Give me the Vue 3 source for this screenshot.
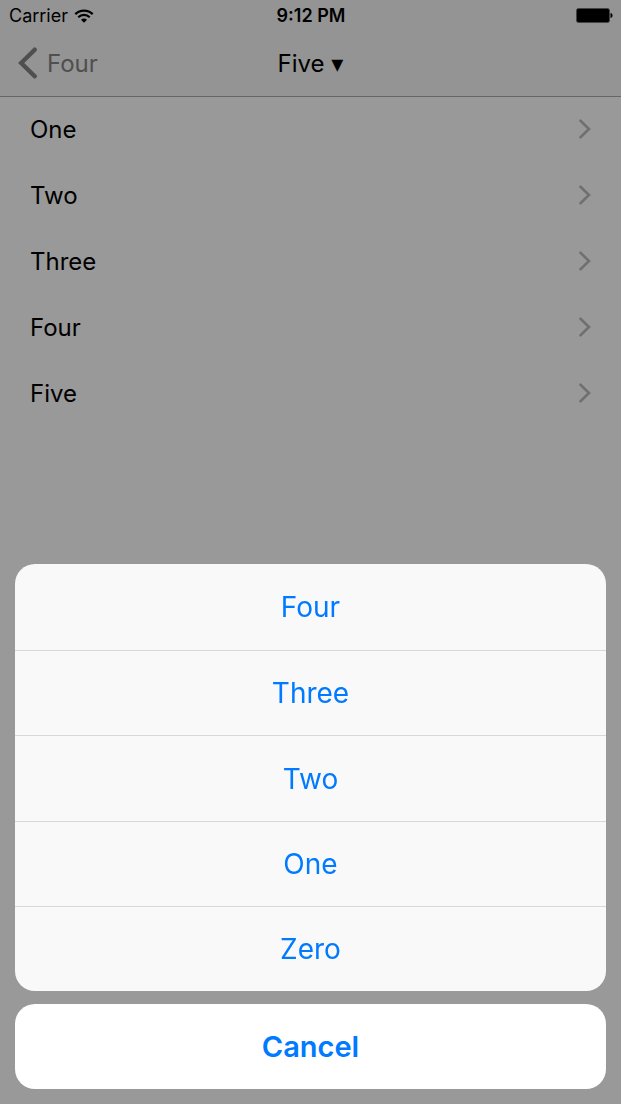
<script setup>
const rows = ['One', 'Two', 'Three', 'Four', 'Five']
const choices = ['Four', 'Three', 'Two', 'One', 'Zero']
</script>

<template>
  <div class="screen">
    <header class="top">
      <div class="status">
        <div class="carrier">
          <span>Carrier</span>
          <svg class="wifi" viewBox="0 0 20 14" aria-hidden="true">
            <path d="M1.3 5.1a12.4 12.4 0 0 1 17.4 0M4.3 8.3a8 8 0 0 1 11.4 0" fill="none" stroke="#000" stroke-width="2.3" />
            <path d="M10 13.7 7 10.7a4.200 4.200 0 0 1 6 0z" fill="#000" />
          </svg>
        </div>
        <span class="clock">9:12 PM</span>
        <svg class="battery" viewBox="0 0 37 15" aria-label="Battery full">
          <rect x="0.5" y="0.5" width="33" height="14" rx="2" fill="#000" stroke="#707070" />
          <path d="M34.5 5c1.3.3 2 1.2 2 2.5s-.7 2.2-2 2.5z" fill="#000" />
        </svg>
      </div>
      <nav class="bar">
        <button class="back" type="button">
          <svg class="back-icon" viewBox="0 0 19 32" aria-hidden="true">
            <path d="M16.7 2.700 3.200 16l13.500 13.300" fill="none" stroke="#848484" stroke-width="4.400" stroke-linecap="round" />
          </svg>
          <span>Four</span>
        </button>
        <button class="title" type="button">Five <span class="caret">▾</span></button>
      </nav>
    </header>
    <main>
      <ul class="list">
        <li v-for="row in rows" :key="row">
          <a class="row" href="#">
            <span>{{ row }}</span>
            <svg class="chevron" viewBox="0 0 12 20" aria-hidden="true">
              <path d="M1.500 1.700 10 10l-8.500 8.300" fill="none" stroke="#bbbbbf" stroke-width="2.600" stroke-linecap="round" />
            </svg>
          </a>
        </li>
      </ul>
    </main>
    <div class="overlay">
      <div class="sheet" role="dialog" aria-label="Choose a page">
        <div class="choices">
          <button v-for="choice in choices" :key="choice" class="choice" type="button">{{ choice }}</button>
        </div>
        <button class="cancel" type="button">Cancel</button>
      </div>
    </div>
  </div>
</template>

<style>
body {
  background: #fff;
}
</style>

<style scoped>
.screen {
  min-height: 100vh;
  background: #fff;
  color: #000;
  font-family: Inter, "Liberation Sans", sans-serif;
}
button {
  border: 0;
  margin: 0;
  padding: 0;
  background: none;
  font: inherit;
  color: inherit;
  cursor: pointer;
}
svg {
  display: block;
  flex: none;
}
.top {
  background: #f7f7f7;
  border-bottom: 1px solid #aaa;
}
.status {
  display: grid;
  grid-template-columns: 1fr auto 1fr;
  align-items: center;
  height: 31px;
  padding: 0 8px 0 9px;
  font-size: 18px;
}
.carrier {
  display: flex;
  align-items: center;
  gap: 6px;
}
.wifi {
  width: 20px;
  height: 14px;
}
.clock {
  font-weight: 600;
}
.battery {
  width: 37px;
  height: 15px;
  justify-self: end;
}
.bar {
  display: grid;
  grid-template-columns: 1fr auto 1fr;
  align-items: center;
  box-sizing: border-box;
  height: 65px;
  padding: 0 18px 1px;
  font-size: 24px;
}
.back {
  display: flex;
  align-items: center;
  justify-self: start;
  gap: 10px;
  color: #848484;
}
.back-icon {
  width: 19px;
  height: 32px;
}
.caret {
  font-family: "DejaVu Sans", sans-serif;
  line-height: 1;
}
.list {
  list-style: none;
  margin: 0;
  padding: 0;
}
.row {
  display: flex;
  align-items: center;
  justify-content: space-between;
  box-sizing: border-box;
  height: 66px;
  padding: 0 30px 2px;
  font-size: 24px;
  color: #000;
  text-decoration: none;
}
.chevron {
  width: 12px;
  height: 20px;
}
.overlay {
  position: fixed;
  inset: 0;
  display: flex;
  flex-direction: column;
  justify-content: flex-end;
  padding: 15px;
  background: rgba(0, 0, 0, 0.4);
}
.sheet {
  display: flex;
  flex-direction: column;
  gap: 13px;
  color: #007aff;
  font-size: 28px;
}
.choices {
  display: flex;
  flex-direction: column;
  overflow: hidden;
  border-radius: 20px;
  background: #f9f9f9;
}
.choice {
  height: 85px;
}
.choice + .choice {
  border-top: 1px solid #d8d8da;
}
.choice:nth-child(-2n + 3) {
  height: 86px;
}
.cancel {
  height: 85px;
  border-radius: 20px;
  background: #fff;
  font-size: 29px;
  font-weight: 600;
}
</style>
